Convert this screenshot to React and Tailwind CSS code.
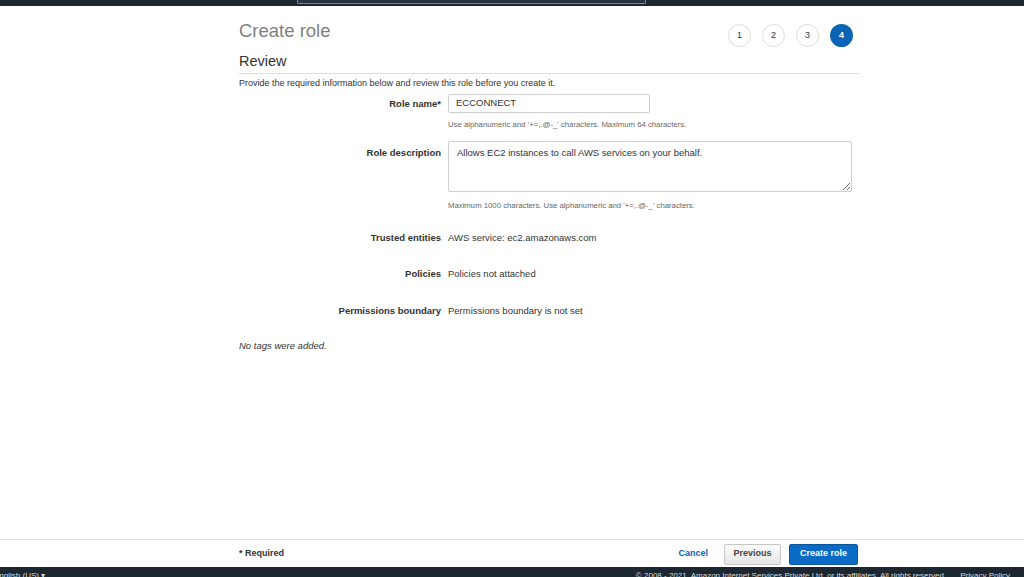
import React from "react";

const font = { fontFamily: '"Liberation Sans", Arial, sans-serif' };

const Row = ({ label, children, className = "" }) => (
  <div className={"grid grid-cols-[202px_1fr] gap-x-[7px] " + className}>
    <div className="text-right font-bold text-[9.5px] leading-[12px] text-[#333]">
      {label}
    </div>
    <div className="text-[9.5px] leading-[12px] text-[#333]">{children}</div>
  </div>
);

const Step = ({ n, active }) => (
  <div
    className={
      "w-[23px] h-[23px] rounded-full flex items-center justify-center text-[9px] " +
      (active
        ? "bg-[#0b63b5] text-white font-bold"
        : "bg-white border border-[#dcdcdc] text-[#333]")
    }
  >
    {n}
  </div>
);

export default function App() {
  return (
    <div className="h-[577px] flex flex-col bg-white overflow-hidden" style={font}>
      {/* top nav strip */}
      <div className="h-[6px] bg-[#1c2731] relative shrink-0">
        <div className="absolute left-[297px] top-[-10px] w-[349px] h-[14px] border border-[#7d868d] bg-[#27333d] rounded-[1px]" />
      </div>

      <div className="flex-1">
        <div className="ml-[239px] w-[620px]">
          {/* header */}
          <div className="mt-[13px] h-[32px] flex justify-between items-start">
            <h1 className="text-[18.5px] leading-[24px] text-[#7f7f7f]">Create role</h1>
            <div className="flex gap-[11px] mt-[5px] mr-[6px]">
              <Step n="1" />
              <Step n="2" />
              <Step n="3" />
              <Step n="4" active />
            </div>
          </div>

          <h2 className="text-[14.5px] leading-[20px] text-[#333] pb-[2px] border-b border-[#dedede]">
            Review
          </h2>

          <p className="mt-[3px] text-[9px] leading-[12px] text-[#333]">
            Provide the required information below and review this role before you create it.
          </p>

          {/* role name */}
          <div className="grid grid-cols-[202px_1fr] gap-x-[7px] mt-[5px] items-center">
            <div className="text-right font-bold text-[9.5px] leading-[12px] text-[#333]">
              Role name*
            </div>
            <div className="w-[202px] h-[19px] border border-[#cfcfcf] rounded-[2px] px-[7px] flex items-center text-[9.5px] text-[#333]">
              ECCONNECT
            </div>
          </div>
          <div className="grid grid-cols-[202px_1fr] gap-x-[7px] mt-[7px]">
            <div />
            <div className="text-[7.75px] leading-[10px] text-[#666]">
              Use alphanumeric and '+=,.@-_' characters. Maximum 64 characters.
            </div>
          </div>

          {/* role description */}
          <div className="grid grid-cols-[202px_1fr] gap-x-[7px] mt-[11px]">
            <div className="text-right font-bold text-[9.5px] leading-[12px] text-[#333] pt-[6px]">
              Role description
            </div>
            <textarea
              readOnly
              defaultValue="Allows EC2 instances to call AWS services on your behalf."
              className="w-[404px] h-[51px] border border-[#cfcfcf] rounded-[2px] px-[8px] py-[5px] text-[9.5px] leading-[12px] text-[#333] outline-none"
              style={font}
            />
          </div>
          <div className="grid grid-cols-[202px_1fr] gap-x-[7px] mt-[9px]">
            <div />
            <div className="text-[7.75px] leading-[10px] text-[#666]">
              Maximum 1000 characters. Use alphanumeric and '+=,.@-_' characters.
            </div>
          </div>

          <Row label="Trusted entities" className="mt-[21px]">
            AWS service: ec2.amazonaws.com
          </Row>
          <Row label="Policies" className="mt-[24px]">
            Policies not attached
          </Row>
          <Row label="Permissions boundary" className="mt-[25px]">
            Permissions boundary is not set
          </Row>

          <p className="mt-[23px] italic text-[9.5px] leading-[12px] text-[#333]">
            No tags were added.
          </p>
        </div>
      </div>

      {/* action bar */}
      <div className="h-[28px] border-t border-[#e2e2e2] shrink-0 flex items-center">
        <div className="ml-[239px] w-[619px] flex items-center justify-between pt-[1px]">
          <span className="text-[9px] font-bold text-[#333]">* Required</span>
          <div className="flex items-center">
            <span className="text-[9px] font-bold text-[#0b62b0] mr-[16px]">Cancel</span>
            <button className="h-[21px] w-[57px] border border-[#c6c6c6] rounded-[2px] bg-gradient-to-b from-[#fbfbfb] to-[#e6e6e6] text-[9px] font-bold text-[#444] mr-[8px]">
              Previous
            </button>
            <button className="h-[21px] w-[69px] border border-[#0a559c] rounded-[2px] bg-[#0b6bc4] text-[9px] font-bold text-white">
              Create role
            </button>
          </div>
        </div>
      </div>

      {/* footer */}
      <div className="h-[10px] bg-[#1c2731] shrink-0 overflow-hidden relative text-[8px] leading-[10px] text-[#d5dbdb]">
        <div className="flex items-start pt-[4px]">
          <span className="ml-[-6px]">English (US) ▾</span>
          <span className="ml-auto mr-[14px]">
            © 2008 - 2021, Amazon Internet Services Private Ltd. or its affiliates. All rights reserved.
          </span>
          <span className="mr-[14px]">Privacy Policy</span>
        </div>
      </div>
    </div>
  );
}
